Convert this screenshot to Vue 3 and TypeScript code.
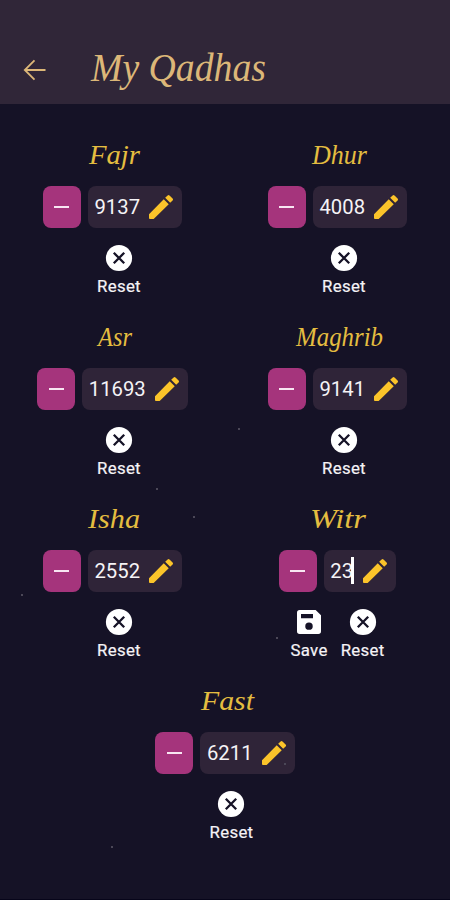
<script setup lang="ts">
import { reactive, ref } from 'vue'

interface Prayer {
  name: string
  count: number
  x: number
  width: number
}

const prayers = reactive<Prayer[]>([
  { name: 'Fajr', count: 9137, x: 36, width: 51 },
  { name: 'Dhur', count: 4008, x: 34, width: 55 },
  { name: 'Asr', count: 11693, x: 45, width: 34 },
  { name: 'Maghrib', count: 9141, x: 18, width: 87 },
  { name: 'Isha', count: 2552, x: 35, width: 52 },
  { name: 'Witr', count: 23, x: 32, width: 56 },
  { name: 'Fast', count: 6211, x: 36, width: 53 },
])

const editing = ref('Witr')

const stars = [
  { x: 238, y: 428 },
  { x: 156, y: 488 },
  { x: 193, y: 516 },
  { x: 21, y: 594 },
  { x: 276, y: 637 },
  { x: 284, y: 763 },
  { x: 111, y: 846 },
]

function decrement(p: Prayer) {
  if (p.count > 0) p.count--
}
</script>

<template>
  <div class="screen">
    <header class="bar">
      <button class="back" aria-label="Back">
        <svg width="24" height="24" viewBox="0 0 24 24">
          <path d="M22.5 12H2M11.5 2.3L1.8 12l9.7 9.7" />
        </svg>
      </button>
      <svg class="heading" width="190" height="60" viewBox="0 0 190 60">
        <text x="4" y="41" textLength="175" lengthAdjust="spacingAndGlyphs">My Qadhas</text>
      </svg>
    </header>

    <main class="grid">
      <section v-for="p in prayers" :key="p.name" class="prayer">
        <svg class="name" width="120" height="44" viewBox="0 0 120 44">
          <text :x="p.x" y="30" :textLength="p.width" lengthAdjust="spacingAndGlyphs">{{ p.name }}</text>
        </svg>
        <div class="counter">
          <button class="minus" aria-label="Decrease" @click="decrement(p)"><i></i></button>
          <div class="field" @click="editing = p.name">
            <span class="value" :class="{ active: editing === p.name }">{{ p.count }}<i v-if="editing === p.name" class="caret"></i></span>
            <svg width="32" height="32" viewBox="0 0 24 24">
              <path d="M3 17.5V20.3q0 .7.7.7H6.5L17.81 9.94l-3.75-3.75zM20.71 7.04a1 1 0 0 0 0-1.41l-2.34-2.34a1 1 0 0 0-1.41 0l-1.83 1.83 3.75 3.75z" />
            </svg>
          </div>
        </div>
        <div class="actions">
          <button v-if="editing === p.name" class="action" @click="editing = ''">
            <svg width="32" height="32" viewBox="0 0 24 24">
              <path fill-rule="evenodd" d="M5 3h12l4 4v12a2 2 0 0 1-2 2H5a2 2 0 0 1-2-2V5a2 2 0 0 1 2-2zM6 6v3.2h9V6zM12 12.3a2.8 2.8 0 1 0 0 5.6a2.8 2.8 0 0 0 0-5.6z" />
            </svg>
            <span>Save</span>
          </button>
          <button class="action reset" @click="p.count = 0">
            <svg width="32" height="32" viewBox="0 0 32 32">
              <circle cx="16" cy="16" r="13.1" />
              <path class="cross" d="M10.8 10.8l10.4 10.4M21.2 10.8L10.8 21.2" />
            </svg>
            <span>Reset</span>
          </button>
        </div>
      </section>
    </main>

    <i v-for="s in stars" :key="s.x" class="star" :style="{ left: s.x + 'px', top: s.y + 'px' }"></i>
  </div>
</template>

<style>
body {
  background: #151226;
}
</style>

<style scoped>
.screen {
  position: relative;
  box-sizing: border-box;
  width: 450px;
  height: 900px;
  overflow: hidden;
  background: #151226;
  border-bottom: 1px solid #07051a;
  font-family: Roboto, sans-serif;
  color: #f5f3f6;
}

button {
  margin: 0;
  padding: 0;
  border: 0;
  background: none;
  color: inherit;
  font: inherit;
}

.bar {
  box-sizing: border-box;
  height: 104px;
  padding: 36px 0 0 23px;
  display: flex;
  align-items: center;
  gap: 40px;
  background: #302638;
}

.back {
  display: flex;
}

.back path {
  fill: none;
  stroke: #dcb778;
  stroke-width: 1.8;
}

.heading text {
  font: italic 40px 'Liberation Serif', serif;
  fill: #dcb778;
}

.grid {
  display: grid;
  grid-template-columns: 225px 225px;
  grid-auto-rows: 182px;
  padding-top: 30px;
}

.prayer {
  display: flex;
  flex-direction: column;
  align-items: center;
}

.prayer:last-child {
  grid-column: 1 / 3;
}

.name {
  margin-bottom: 8px;
  overflow: visible;
}

.name text {
  font: italic 28px 'Liberation Serif', serif;
  fill: #e4bd40;
}

.counter {
  display: flex;
  gap: 7px;
}

.minus {
  display: flex;
  align-items: center;
  justify-content: center;
  width: 38px;
  height: 42px;
  border-radius: 8px;
  background: #a5347c;
}

.minus i {
  width: 15px;
  height: 2px;
  background: #f8e6f2;
}

.field {
  display: flex;
  align-items: center;
  gap: 5px;
  height: 42px;
  padding: 0 5px 0 6.5px;
  border-radius: 8px;
  background: #2f2438;
}

.value {
  position: relative;
  font-size: 20.3px;
  line-height: 43px;
}

.value.active {
  padding-right: 1px;
}

.caret {
  position: absolute;
  right: 0;
  top: 7px;
  width: 3px;
  height: 27px;
  background: #fff;
}

.field path {
  fill: #fbc42a;
}

.actions {
  display: flex;
  margin-top: 14px;
}

.action {
  display: flex;
  flex-direction: column;
  align-items: center;
  font-size: 16.8px;
  line-height: 20px;
  letter-spacing: 0.3px;
  -webkit-text-stroke: 0.2px currentColor;
}

.action svg {
  margin-bottom: 2px;
  fill: #fff;
}

.reset {
  margin-left: 13px;
}

.cross {
  fill: none;
  stroke: #151226;
  stroke-width: 2.3;
}

.star {
  position: absolute;
  width: 2px;
  height: 2px;
  background: #4b4757;
}
</style>
